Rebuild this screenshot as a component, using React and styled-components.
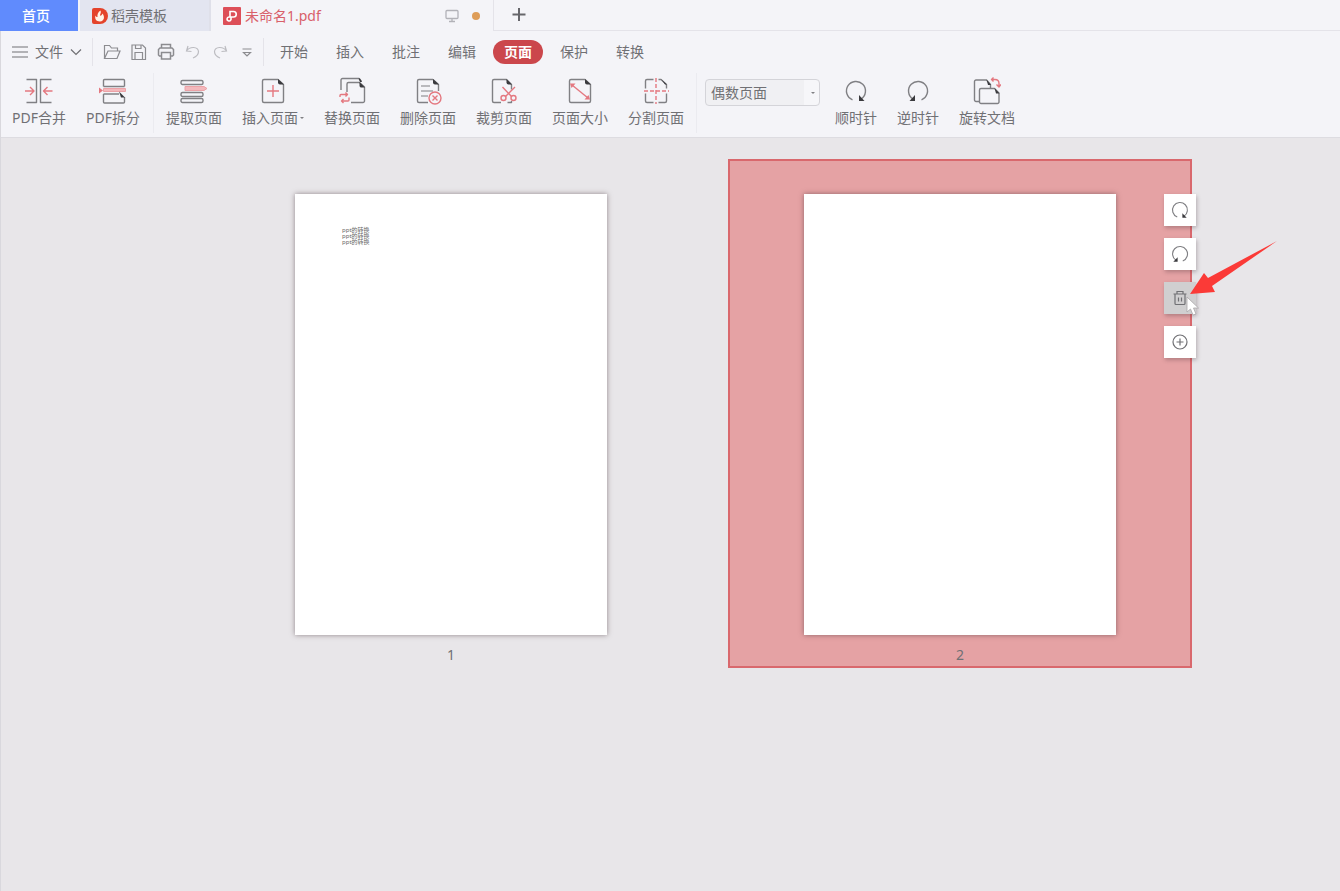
import React from 'react';

import styled, { createGlobalStyle, css } from 'styled-components';

const GlobalStyle = createGlobalStyle`
  * {
    box-sizing: border-box;
  }
  :root {
    --bar: #f4f4f8;
    --line: #e4e3e9;
    --ink: #707074;
    --icon: #808084;
    --red: #e47880;
    --mainRed: #cb474c;
    --canvas: #e8e6e9;
  }
  body {
    margin: 0;
    background: var(--canvas);
    color: var(--ink);
    font-family: 'Noto Sans', 'Noto Sans CJK SC', sans-serif;
    font-size: 14px;
    line-height: 20px;
  }
  button,
  select {
    font: inherit;
    color: inherit;
    background: none;
    border: 0;
    padding: 0;
    margin: 0;
  }
  svg {
    display: block;
    flex: none;
  }
`;

const Sheet = () => (
  <>
    <path d="M19 2.5H5A1.5 1.5 0 0 0 3.5 4v20A1.5 1.5 0 0 0 5 25.5h18a1.5 1.5 0 0 0 1.5-1.500V7.500z" />
    <path className="dark" d="M19 2l6 5.500h-4q-2 0-2-2z" />
  </>
);

const icons = {
  merge: (
    <>
      <path d="M1.5 2.5h10v23h-10M26.5 2.5h-11v23h11" />
      <path className="red" d="M0 14h9M5 10l4 4-4 4M27.5 14h-9M22.5 10l-4 4 4 4" />
    </>
  ),
  split: (
    <>
      <path d="M4.500 9.500V3.500a1 1 0 0 1 1-1h19a1 1 0 0 1 1 1v6" />
      <path d="M4.500 17v8a1 1 0 0 0 1 1h19a1 1 0 0 0 1-1v-5M4.500 9.500h21M4.500 17H20" />
      <path className="pink" d="M4.500 11.500h22v3h-22z" />
      <path className="redFill" d="M0 10.500l4 3-4 3z" />
      <path className="dark" d="M20 14.500l6 6h-4z" />
    </>
  ),
  extract: (
    <>
      <rect x="1" y="3.5" width="22" height="4" rx="1.5" />
      <rect x="1" y="15.5" width="22" height="4" rx="1.5" />
      <rect x="1" y="21.5" width="22" height="4" rx="1.5" />
      <path className="pink" d="M5 9.500h19l3 2-3 2H5z" />
    </>
  ),
  insert: (
    <>
      <Sheet />
      <path className="red" d="M14 8v12M8 14h12" />
    </>
  ),
  replace: (
    <>
      <path d="M3 13V3a1.500 1.500 0 0 1 1.500-1.500h16.500l2.500 3M13 25.500h12a1.500 1.500 0 0 0 1.500-1.500V10L21.500 5.500h-11A1.500 1.500 0 0 0 9 7v8" />
      <path className="dark" d="M21.500 5l5.500 5.500h-4q-1.500 0-1.500-2zM20.500 1.500h1.500l2 3.500h-2z" />
      <path className="red" d="M2 20v-1.500q0-1 1-1h6M7.500 15.500l2 2-2 2M11 20.500V23q0 1-1 1H3.500M5.500 22l-2 2 2 2" />
    </>
  ),
  remove: (
    <>
      <path d="M19 2.500H5A1.500 1.500 0 0 0 3.500 4v20A1.500 1.500 0 0 0 5 25.500h9M24.500 14V7.500L19 2.500" />
      <path className="dark" d="M19 2l6 5.500h-4q-2 0-2-2z" />
      <path className="soft" d="M7 9h9M7 14h12M7 19h7" />
      <circle className="red" cx="21" cy="21" r="6" />
      <path className="red" d="M18.5 18.5l5 5M23.5 18.5l-5 5" />
    </>
  ),
  crop: (
    <>
      <path d="M11 25.500H4A1.500 1.500 0 0 1 2.500 24V4A1.500 1.500 0 0 1 4 2.500h12.500L21.500 7.500v5M21.500 24v1.500h-4" />
      <path className="dark" d="M16.500 2l5.500 5.500h-3.500q-2 0-2-2z" />
      <path className="red" d="M12.500 10l9 9.500M25 10l-9.500 9.500" />
      <circle className="red" cx="13.5" cy="21" r="2.500" />
      <circle className="red" cx="23.5" cy="21" r="2.500" />
    </>
  ),
  size: (
    <>
      <Sheet />
      <path className="red" d="M6 8l16 13" />
      <path className="redFill" d="M4 6.500h5.500l-4 4.500zM24 22.500h-5.500l4-4.500z" />
    </>
  ),
  divide: (
    <>
      <path d="M19 2.500H5A1.500 1.500 0 0 0 3.500 4v20A1.500 1.500 0 0 0 5 25.500h18a1.500 1.500 0 0 0 1.500-1.500V7.500z" />
      <path className="dark" d="M19 2l6 5.500h-2z" />
      <path className="gap" d="M14 0v28M2 14h25" />
      <path className="red" strokeDasharray="4 2" d="M14 1v26M2 14h25" />
    </>
  ),
  clockwise: (
    <>
      <path d="M10.500 22.800A9.500 9.500 0 1 1 19 22" />
      <path className="dark" d="M17 18v6h5.500z" />
    </>
  ),
  counter: (
    <>
      <path d="M17.500 22.800A9.500 9.500 0 1 0 9 22" />
      <path className="dark" d="M11 18v6H5.500z" />
    </>
  ),
  rotateDoc: (
    <>
      <path d="M6 24.500H3A1.500 1.500 0 0 1 1.500 23V4.500A1.500 1.500 0 0 1 3 3h10.500l4 4.500v4" />
      <path d="M21.500 11.500H8A1.500 1.500 0 0 0 6.500 13v12A1.500 1.500 0 0 0 8 26.500h16.500A1.500 1.500 0 0 0 26 25v-9z" />
      <path className="dark" d="M13.500 2.500l4.500 5.500h-3zM21.500 11l5 5.500h-3.500z" />
      <path className="red" d="M18.500 2.500h3.500q4 0 4 4v3M20.500 0.500L18.500 2.500l2 2M23.500 7.500l2.500 2.500 2-2.500" />
    </>
  ),
};

const Glyph = styled.svg`
  width: ${({ $size }) => $size || 28}px;
  height: ${({ $size }) => $size || 28}px;
  fill: none;
  stroke: var(--icon);
  stroke-width: 1.4;
  stroke-linejoin: round;
  .red {
    stroke: var(--red);
  }
  .soft {
    stroke: #a5a5a9;
  }
  .gap {
    stroke: var(--bar);
    stroke-width: 5;
  }
  .dark {
    fill: #3a3a3e;
    stroke: none;
  }
  .pink {
    fill: #f3b8bc;
    stroke: #eca2a7;
    stroke-width: 1;
  }
  .redFill {
    fill: var(--red);
    stroke: none;
  }
`;

const Icon = ({ name, size }) => (
  <Glyph $size={size} viewBox="0 0 28 28" aria-hidden="true">
    {icons[name]}
  </Glyph>
);

const TabBar = styled.div`
  display: flex;
  height: 31px;
  background: var(--bar);
`;

const Tab = styled.button`
  display: flex;
  align-items: center;
  gap: 4px;
  height: 31px;
  ${({ $kind }) =>
    $kind === 'home' &&
    css`
      width: 78px;
      padding-left: 22px;
      color: #fff;
      font-weight: 500;
      background: #608bfd;
    `}
  ${({ $kind }) =>
    $kind === 'plain' &&
    css`
      width: 133px;
      padding-left: 12px;
      gap: 3px;
      background: #e3e5f0;
      border-left: 2px solid var(--bar);
      border-right: 2px solid #dfe0e9;
    `}
  ${({ $kind }) =>
    $kind === 'active' &&
    css`
      width: 283px;
      padding: 0 13px 0 12px;
      color: #d9606a;
      border-right: 1px solid var(--line);
    `}
`;

const TabStatus = styled.span`
  display: flex;
  align-items: center;
  gap: 13px;
  margin-left: auto;
`;

const Dot = styled.span`
  width: 8px;
  height: 8px;
  border-radius: 50%;
  background: #de9d58;
`;

const TabRest = styled.div`
  flex: 1;
  padding: 0 16px;
  border-bottom: 1px solid var(--line);
`;

const AddTab = styled.button`
  display: flex;
  align-items: center;
  height: 30px;
`;

const AppFrame = styled.div`
  border-left: 1px solid #d9d8dd;
  background: var(--bar);
`;

const MenuRow = styled.div`
  display: flex;
  align-items: center;
  height: 42px;
`;

const FileButton = styled.button`
  display: flex;
  align-items: center;
  gap: 7px;
  height: 28px;
  padding: 0 10px 0 11px;
  border-right: 1px solid var(--line);
`;

const QuickBar = styled.div`
  display: flex;
  align-items: center;
  gap: 9px;
  height: 28px;
  padding: 0 7px 0 10px;
  border-right: 1px solid var(--line);
`;

const QuickButton = styled.button`
  display: flex;
  color: ${({ $faded }) => ($faded ? '#bcbcc1' : '#8c8c90')};
`;

const MenuNav = styled.nav`
  display: flex;
  gap: 6px;
  padding-left: 5px;
`;

const MenuItem = styled.button`
  width: 50px;
  height: 24px;
  border-radius: 12px;
  ${({ $active }) =>
    $active &&
    css`
      color: #fff;
      font-weight: 700;
      background: var(--mainRed);
    `}
`;

const Ribbon = styled.div`
  display: flex;
  height: 65px;
  border-bottom: 1px solid #dddce1;
`;

const ToolGroup = styled.div`
  display: flex;
  gap: ${({ $gap }) => $gap}px;
  height: 60px;
  padding: ${({ $pad }) => $pad};
  border-right: ${({ $last }) => ($last ? 0 : '1px solid #ebebf0')};
`;

const Tool = styled.button`
  display: flex;
  flex-direction: column;
  align-items: center;
  gap: 3px;
  height: 60px;
  padding-top: 4px;
  white-space: nowrap;
`;

const ToolLabel = styled.span`
  display: flex;
  align-items: center;
  gap: 2px;
`;

const Caret = styled.span`
  width: 0;
  height: 0;
  border: 2px solid transparent;
  border-top-color: var(--icon);
  border-bottom-width: 0;
`;

const SelectBox = styled.label`
  display: flex;
  align-items: center;
  width: 115px;
  height: 27px;
  margin: 6px 15px 0 8px;
  padding-right: 4px;
  border: 1px solid #d4d4d9;
  border-radius: 4px;
  background: linear-gradient(to left, #f6f6f9 15px, #f0f0f3 15px);
  select {
    appearance: none;
    flex: 1;
    height: 25px;
    padding-left: 5px;
    outline: 0;
  }
`;

const Canvas = styled.main`
  display: flex;
  justify-content: center;
  gap: 45px;
  min-height: calc(100vh - 138px);
  padding: 21px 0 60px 70px;
  background: var(--canvas);
`;

const Tile = styled.section`
  position: relative;
  display: flex;
  flex-direction: column;
  align-items: center;
  align-self: flex-start;
  width: 464px;
  padding: 33px 0 0;
  border: 2px solid ${({ $selected }) => ($selected ? '#d9686d' : 'transparent')};
  background: ${({ $selected }) => ($selected ? '#e5a2a4' : 'transparent')};
`;

const Paper = styled.div`
  width: 312px;
  height: 441px;
  padding: 33px 47px;
  color: #666;
  font-size: 6px;
  line-height: 6px;
  background: #fff;
  box-shadow: 0 0 5px rgba(60, 40, 45, 0.5);
`;

const PageNumber = styled.div`
  padding: 10px 0 1px;
`;

const PageTools = styled.div`
  position: absolute;
  top: 33px;
  right: -6px;
  display: grid;
  gap: 12px;
`;

const PageTool = styled.button`
  display: grid;
  place-items: center;
  width: 32px;
  height: 32px;
  background: ${({ $hover }) => ($hover ? '#d0cfd0' : '#fff')};
  box-shadow: 1px 2px 4px rgba(60, 40, 45, 0.3);
`;

const Pointer = styled.svg`
  position: absolute;
  top: 102px;
  left: 22px;
`;

const RedArrow = styled.svg`
  position: absolute;
  top: 47px;
  left: 26px;
`;

const line = { fill: 'none', stroke: 'currentColor', strokeWidth: 1.2 };

const quickActions = [
  {
    label: '打开',
    art: <path d="M1.5 15.5V2.5h5l2 2.5h6v3M1.5 15.5L5 8h12l-3 7.5z" />,
  },
  {
    label: '保存',
    art: <path d="M2 2h10.500l3 3v11.500H2zM5 16V9.500h7.500V16M5.500 2.500v3H11V2.500" />,
  },
  {
    label: '打印',
    art: (
      <path
        strokeWidth="1.5"
        d="M4.500 5V1.500h9V5M4.500 13H2.500L1.500 12V6.500L3 5h12l1.500 1.500V12l-1 1h-2M4.500 9.500h9v6.500h-9z"
      />
    ),
  },
  {
    label: '撤销',
    faded: true,
    art: <path d="M4 3l-1.500 5 5 .5M2.500 8C6 3 14 3.500 14.500 8.500c0 4-3 5.500-5.500 6.500" />,
  },
  {
    label: '恢复',
    faded: true,
    art: <path d="M14 3l1.500 5-5 .5M15.500 8C12 3 4 3.500 3.500 8.500c0 4 3 5.500 5.500 6.500" />,
  },
  {
    label: '自定义',
    art: <path d="M4.500 6h9M5.500 9.500h7L9 13z" />,
  },
];

const menus = ['开始', '插入', '批注', '编辑', '页面', '保护', '转换'];

const fileTools = [
  ['merge', 'PDF合并'],
  ['split', 'PDF拆分'],
];

const pageTools = [
  ['extract', '提取页面'],
  ['insert', '插入页面', true],
  ['replace', '替换页面'],
  ['remove', '删除页面'],
  ['crop', '裁剪页面'],
  ['size', '页面大小'],
  ['divide', '分割页面'],
];

const rotateTools = [
  ['clockwise', '顺时针'],
  ['counter', '逆时针'],
  ['rotateDoc', '旋转文档'],
];

const renderTool = ([icon, label, menu]) => (
  <Tool key={icon} type="button">
    <Icon name={icon} />
    <ToolLabel>
      {label}
      {menu && <Caret />}
    </ToolLabel>
  </Tool>
);

const Tabs = () => (
  <TabBar>
    <Tab type="button" $kind="home">
      首页
    </Tab>
    <Tab type="button" $kind="plain">
      <svg width="16" height="18" viewBox="0 0 16 18">
        <path d="M0 3q0-2 2-2h6a8 8 0 0 1 0 16H2q-2 0-2-2z" fill="#e4432b" />
        <path
          d="M8.5 3.5c1 2-.5 3.5-.5 5 1 .5 2-.5 2.5-2 2.5 3 2 7.500-2.500 8-4 0-5.500-3-4.500-6 .5 1 1 1.500 2 1.500C5 7.500 6 5 8.500 3.500z"
          fill="#fff3e8"
        />
      </svg>
      稻壳模板
    </Tab>
    <Tab type="button" $kind="active">
      <svg width="18" height="18" viewBox="0 0 18 18">
        <rect width="18" height="18" rx="1" fill="#dd4f58" />
        <path
          d="M7 9.5V4.5h3.5a2.700 2.700 0 0 1 0 5.500H6a2 2 0 1 0 2 2.500V10"
          fill="none"
          stroke="#fff"
          strokeWidth="1.6"
        />
      </svg>
      未命名1.pdf
      <TabStatus>
        <svg width="14" height="14" viewBox="0 0 14 14" fill="none" stroke="#b2b2b8" strokeWidth="1.3">
          <rect x="1" y="1.5" width="12" height="8" rx="1" />
          <path d="M7 9.500v3M4 12.500h6" />
        </svg>
        <Dot />
      </TabStatus>
    </Tab>
    <TabRest>
      <AddTab type="button" aria-label="新建">
        <svg width="18" height="18" viewBox="0 0 18 18" stroke="#66666b" strokeWidth="2">
          <path d="M9 2v13M2.500 8.500h13" />
        </svg>
      </AddTab>
    </TabRest>
  </TabBar>
);

const Menu = () => (
  <MenuRow>
    <FileButton type="button">
      <svg width="16" height="16" viewBox="0 0 16 16" {...line}>
        <path d="M0 3h16M0 8h16M0 13h16" />
      </svg>
      文件
      <svg width="12" height="12" viewBox="0 0 12 12" {...line}>
        <path d="M1 3.500l5 5 5-5" />
      </svg>
    </FileButton>
    <QuickBar>
      {quickActions.map(({ label, faded, art }) => (
        <QuickButton key={label} type="button" aria-label={label} $faded={faded}>
          <svg width="18" height="18" viewBox="0 0 18 18" {...line}>
            {art}
          </svg>
        </QuickButton>
      ))}
    </QuickBar>
    <MenuNav>
      {menus.map((name) => (
        <MenuItem key={name} type="button" $active={name === '页面'}>
          {name}
        </MenuItem>
      ))}
    </MenuNav>
  </MenuRow>
);

const App = () => (
  <>
    <GlobalStyle />
    <Tabs />
    <AppFrame>
      <Menu />
      <Ribbon>
        <ToolGroup $gap={20} $pad="0 13px 0 11px">
          {fileTools.map(renderTool)}
        </ToolGroup>
        <ToolGroup $gap={20} $pad="0 12px 0 12px">
          {pageTools.map(renderTool)}
        </ToolGroup>
        <SelectBox>
          <select aria-label="页面范围" defaultValue="even">
            <option value="even">偶数页面</option>
            <option value="odd">奇数页面</option>
            <option value="all">所有页面</option>
          </select>
          <Caret />
        </SelectBox>
        <ToolGroup $gap={20} $pad="0" $last>
          {rotateTools.map(renderTool)}
        </ToolGroup>
      </Ribbon>
      <Canvas>
        <Tile>
          <Paper>
            <div>ppt的转换</div>
            <div>ppt的转换</div>
            <div>ppt的转换</div>
          </Paper>
          <PageNumber>1</PageNumber>
        </Tile>
        <Tile $selected>
          <Paper />
          <PageNumber>2</PageNumber>
          <PageTools>
            <PageTool type="button" aria-label="顺时针旋转">
              <Icon name="clockwise" size={22} />
            </PageTool>
            <PageTool type="button" aria-label="逆时针旋转">
              <Icon name="counter" size={22} />
            </PageTool>
            <PageTool type="button" aria-label="删除" $hover>
              <svg width="16" height="16" viewBox="0 0 16 16" {...line}>
                <path d="M1.5 4h13M5 4V1.500h6V4M3 4v9.500q0 1 1 1h8q1 0 1-1V4M6.500 7.500v4M9.500 7.500v4" />
              </svg>
            </PageTool>
            <PageTool type="button" aria-label="添加">
              <svg width="16" height="16" viewBox="0 0 16 16" {...line}>
                <circle cx="8" cy="8" r="7" />
                <path d="M8 4.500v7M4.500 8h7" />
              </svg>
            </PageTool>
            <Pointer width="14" height="20" viewBox="0 0 14 20">
              <path
                d="M1 1v15l3.500-3 2.500 6 3-1-2.500-6h5z"
                fill="#fff"
                stroke="#a9a6a8"
                strokeWidth="0.8"
              />
            </Pointer>
            <RedArrow width="87" height="54" viewBox="0 0 87 54">
              <path d="M0 53L14 32l4 5L87 0 22 45l3 6z" fill="#fb3a37" />
            </RedArrow>
          </PageTools>
        </Tile>
      </Canvas>
    </AppFrame>
  </>
);

export default App;
